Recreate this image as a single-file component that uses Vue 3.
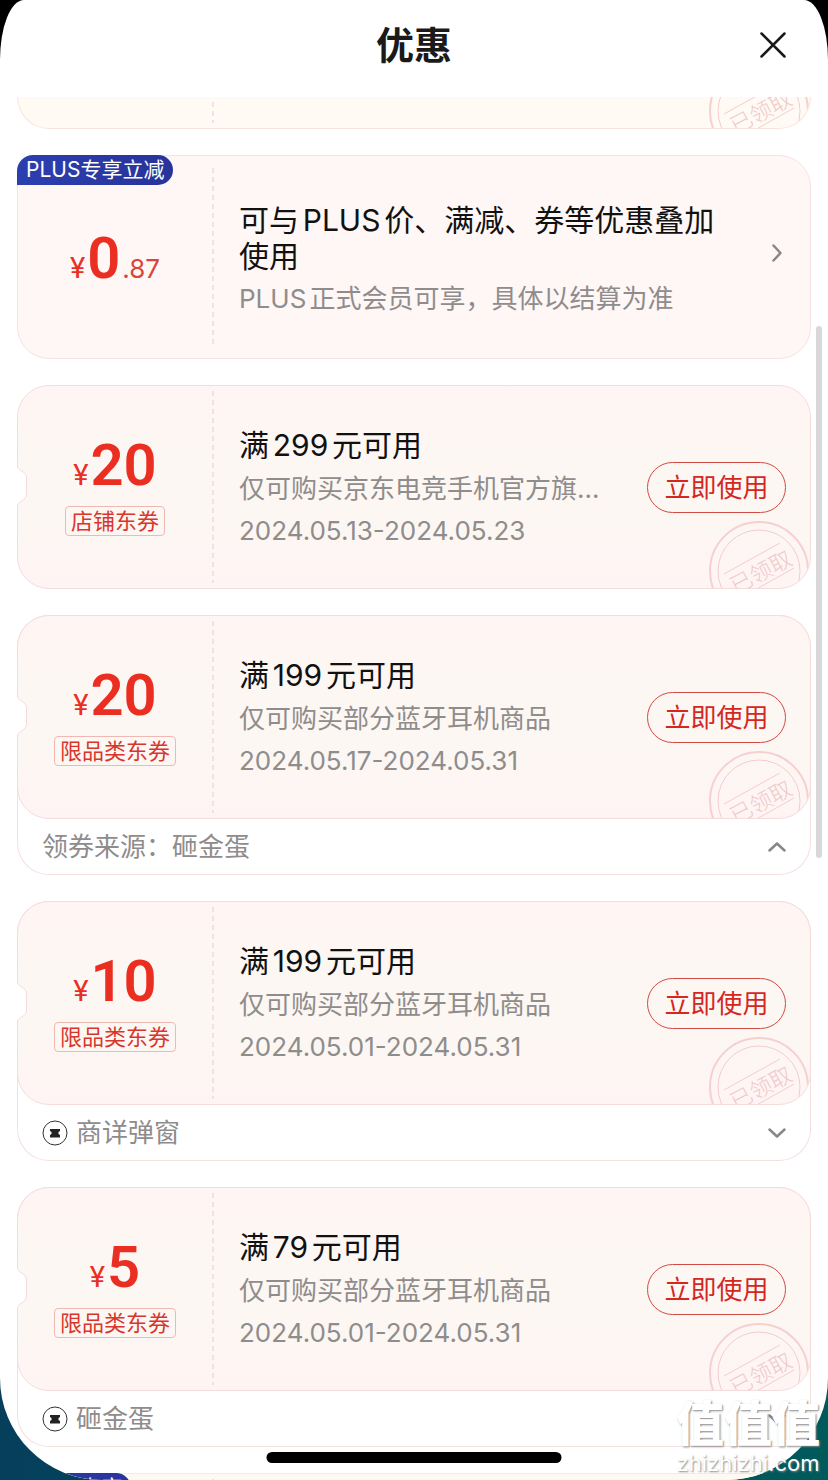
<script setup>
import { ref } from 'vue'

const coupons = ref([
  {
    id: 1,
    amount: '20',
    tag: '店铺东券',
    title: '满299元可用',
    desc: '仅可购买京东电竞手机官方旗舰店商品',
    period: '2024.05.13-2024.05.23'
  },
  {
    id: 2,
    amount: '20',
    tag: '限品类东券',
    title: '满199元可用',
    desc: '仅可购买部分蓝牙耳机商品',
    period: '2024.05.17-2024.05.31',
    source: '领券来源：砸金蛋',
    open: true
  },
  {
    id: 3,
    amount: '10',
    tag: '限品类东券',
    title: '满199元可用',
    desc: '仅可购买部分蓝牙耳机商品',
    period: '2024.05.01-2024.05.31',
    source: '商详弹窗',
    icon: true,
    open: false
  },
  {
    id: 4,
    amount: '5',
    tag: '限品类东券',
    title: '满79元可用',
    desc: '仅可购买部分蓝牙耳机商品',
    period: '2024.05.01-2024.05.31',
    source: '砸金蛋',
    icon: true,
    open: false
  }
])
</script>

<template>
  <div class="screen">
    <main class="sheet">
      <header class="header">
        <h1 class="heading">优惠</h1>
        <button class="close" type="button" aria-label="关闭">
          <svg width="28" height="28" viewBox="0 0 28 28" aria-hidden="true">
            <path d="M2.5 2.5 25.5 25.5M25.5 2.5 2.5 25.5" />
          </svg>
        </button>
      </header>

      <div class="list">
        <div class="ticket tail">
          <div class="left"></div>
          <div class="stamp">
            <svg width="102" height="68" viewBox="0 0 102 68" aria-hidden="true">
              <circle class="ring" cx="51" cy="51" r="49" />
              <circle class="thin" cx="51" cy="51" r="41" />
              <path class="thin" d="M16 54 72 23M38 75 86 48" />
              <text x="53" y="60" text-anchor="middle" transform="rotate(-28 53 52)">已领取</text>
            </svg>
          </div>
        </div>

        <article class="ticket plus">
          <span class="badge">PLUS专享立减</span>
          <div class="left">
            <p class="amount"><small>¥</small><b>0</b><i>.87</i></p>
          </div>
          <div class="info">
            <h2 class="title wrap">可与PLUS价、满减、券等优惠叠加使用</h2>
            <p class="desc">PLUS正式会员可享，具体以结算为准</p>
          </div>
          <button class="more" type="button" aria-label="查看详情">
            <svg width="10" height="18" viewBox="0 0 10 18" aria-hidden="true">
              <path d="M1.5 1.5 8.5 9 1.5 16.5" />
            </svg>
          </button>
        </article>

        <article v-for="c in coupons" :key="c.id" class="coupon" :class="{ sourced: c.source }">
          <div class="ticket">
            <svg class="notch" width="11" height="40" viewBox="0 0 11 40" aria-hidden="true">
              <path class="mask" d="M0 0H1C1 4 9 5 9 11V29C9 35 1 36 1 40H0Z" />
              <path class="edge" d="M.5 0C.5 5 9.5 5 9.5 12V28C9.5 35 .5 35 .5 40" />
            </svg>
            <div class="left">
              <p class="amount"><small>¥</small><b>{{ c.amount }}</b></p>
              <span class="tag">{{ c.tag }}</span>
            </div>
            <div class="info">
              <h2 class="title">{{ c.title }}</h2>
              <p class="desc">{{ c.desc }}</p>
              <p class="date">{{ c.period }}</p>
            </div>
            <button class="use" type="button">立即使用</button>
            <div class="stamp">
              <svg width="102" height="68" viewBox="0 0 102 68" aria-hidden="true">
                <circle class="ring" cx="51" cy="51" r="49" />
                <circle class="thin" cx="51" cy="51" r="41" />
                <path class="thin" d="M16 54 72 23M38 75 86 48" />
                <text x="53" y="60" text-anchor="middle" transform="rotate(-28 53 52)">已领取</text>
              </svg>
            </div>
          </div>
          <footer v-if="c.source" class="source">
            <svg v-if="c.icon" class="mark" width="26" height="26" viewBox="0 0 26 26" aria-hidden="true">
              <circle cx="13" cy="13" r="12" />
              <path d="M8 9H18V11L16.500 12V14L18 15V17.500H8V15L9.500 14V12L8 11Z" />
            </svg>
            <span>{{ c.source }}</span>
            <button class="toggle" type="button" aria-label="领券来源" :aria-expanded="c.open" @click="c.open = !c.open">
              <svg width="18" height="10" viewBox="0 0 18 10" aria-hidden="true">
                <path :d="c.open ? 'M1.500 8.500 9 1.500 16.500 8.500' : 'M1.500 1.500 9 8.500 16.500 1.500'" />
              </svg>
            </button>
          </footer>
        </article>

        <article class="ticket next">
          <span class="badge">PLUS专享</span>
          <div class="left"></div>
        </article>
      </div>

      <div class="scrollbar"></div>
    </main>

    <div class="home-bar"></div>
    <div class="watermark">
      <strong>值值值</strong>
      <span>zhizhizhi.com</span>
    </div>
  </div>
</template>

<style>
body {
  margin: 0;
}
</style>

<style scoped>
.screen {
  position: relative;
  height: 100vh;
  overflow: hidden;
  background:
    linear-gradient(#000, #000) top / 100% 50% no-repeat,
    linear-gradient(90deg, #053f5c, #005a5a);
  font-family: Inter, "Noto Sans CJK SC", sans-serif;
  text-autospace: normal;
  color: #1a1a1a;
}
.sheet {
  position: relative;
  display: flex;
  flex-direction: column;
  height: 100%;
  overflow: hidden;
  background: #fff;
  border-radius: 24px 24px 102px 102px / 60px 60px 102px 102px;
}
h1,
h2,
p {
  margin: 0;
  font-weight: 400;
}
button {
  padding: 0;
  border: 0;
  background: none;
  font: inherit;
  cursor: pointer;
}
svg {
  display: block;
  fill: none;
}
.header {
  flex: none;
  display: grid;
  grid-template-columns: 1fr auto 1fr;
  align-items: center;
  height: 90px;
  margin-bottom: 7px;
  padding: 0 41px;
}
.heading {
  grid-column: 2;
  font-size: 38px;
  line-height: 48px;
  font-weight: 700;
}
.close {
  justify-self: end;
}
.close path {
  stroke: #1a1a1a;
  stroke-width: 2.5;
  stroke-linecap: round;
}
.list {
  flex: 1;
  min-height: 0;
  overflow: hidden;
  display: flex;
  flex-direction: column;
  gap: 26px;
  padding: 0 17px;
}
.ticket {
  flex: none;
  position: relative;
  box-sizing: border-box;
  display: flex;
  align-items: center;
  height: 204px;
  padding-right: 24px;
  border: 1px solid #f5dcdc;
  border-radius: 32px;
  background: linear-gradient(#fff5f4, #fcf7f3 35%, #fcf7f3 65%, #fff4f4);
}
.tail {
  height: 32px;
  border-top: 0;
  border-color: #f8e6dc;
  border-radius: 0 0 32px 32px;
  background: #fffaf4;
}
.plus {
  background: #fff6f6;
  border-color: #f6e2e4;
}
.next {
  background: #fffaf0;
  border-color: #f8ecd8;
}
.coupon {
  flex: none;
}
.sourced {
  border-radius: 32px;
  background: #fff;
  box-shadow: inset 0 0 0 1px #f5e0e0;
}
.left {
  flex: none;
  align-self: stretch;
  box-sizing: border-box;
  position: relative;
  display: flex;
  flex-direction: column;
  align-items: center;
  justify-content: center;
  gap: 5px;
  width: 196px;
  padding-right: 2px;
}
.left::after {
  content: "";
  position: absolute;
  top: 5px;
  bottom: 5px;
  right: 0;
  width: 2px;
  background: repeating-linear-gradient(#eee2e2 0 5px, transparent 5px 9px);
}
.plus .left {
  padding-top: 12px;
}
.plus .left::after {
  top: 12px;
  bottom: 12px;
}
.amount {
  display: flex;
  align-items: baseline;
  gap: 2px;
  color: #ea2f22;
  font-family: Roboto, sans-serif;
  line-height: 52px;
}
.amount b {
  font-size: 58px;
  font-weight: 600;
}
.amount small {
  font-size: 29px;
  font-weight: 400;
}
.amount i {
  font-family: Inter, sans-serif;
  font-size: 26px;
  font-style: normal;
  color: #d9453c;
}
.tag {
  padding: 0 5px;
  border: 1px solid #f0b8b2;
  border-radius: 4px;
  font-size: 22px;
  line-height: 28px;
  color: #d8362c;
}
.info {
  flex: 1;
  min-width: 0;
  padding-left: 25px;
}
.title {
  font-size: 30px;
  line-height: 46px;
  color: #111;
}
.wrap {
  line-height: 36px;
  padding-top: 8px;
}
.desc {
  overflow: hidden;
  white-space: nowrap;
  text-overflow: ellipsis;
  font-size: 26px;
  line-height: 42px;
  color: #8f8c8c;
}
.plus .desc {
  padding-top: 4px;
}
.date {
  font-size: 26px;
  line-height: 42px;
  color: #8f8c8c;
}
.use {
  flex: none;
  box-sizing: border-box;
  width: 139px;
  height: 51px;
  margin-left: 40px;
  border: 1px solid #cf4a44;
  border-radius: 26px;
  font-size: 26px;
  line-height: 49px;
  color: #d4271f;
}
.more {
  flex: none;
  margin: 0 4px 8px 30px;
}
.more path,
.toggle path {
  stroke: #8a8686;
  stroke-width: 2.5;
  stroke-linecap: round;
  stroke-linejoin: round;
}
.badge {
  position: absolute;
  top: -1px;
  left: -1px;
  padding: 0 9px;
  border-radius: 16px 15px 15px 0;
  background: linear-gradient(90deg, #2c3fb0, #28339a);
  font-size: 21px;
  line-height: 30px;
  color: #fff;
  text-autospace: no-autospace;
}
.notch {
  position: absolute;
  left: -1px;
  top: 80px;
}
.mask {
  fill: #fff;
}
.edge {
  stroke: #f3dcdc;
}
.stamp {
  position: absolute;
  right: 0;
  bottom: 0;
  overflow: hidden;
  border-bottom-right-radius: 31px;
}
.tail .stamp {
  height: 32px;
  display: flex;
  align-items: flex-end;
}
.stamp svg {
  flex: none;
}
.stamp .ring {
  stroke: #f6cfcf;
  stroke-width: 2;
}
.stamp .thin {
  stroke: #f3cccc;
}
.stamp text {
  font-size: 22px;
  font-weight: 300;
  fill: #f0c8c8;
}
.source {
  display: flex;
  align-items: center;
  gap: 8px;
  height: 56px;
  padding: 0 25px;
  font-size: 26px;
  line-height: 36px;
  color: #8f8c8c;
}
.mark circle {
  stroke: #333;
}
.mark path {
  fill: #222;
}
.toggle {
  margin-left: auto;
}
.scrollbar {
  position: absolute;
  top: 22%;
  right: 6px;
  width: 6px;
  height: 36%;
  border-radius: 3px;
  background: #d8d8d8;
}
.home-bar {
  position: absolute;
  left: 50%;
  bottom: 17px;
  width: 295px;
  height: 11px;
  border-radius: 6px;
  background: #000;
  transform: translateX(-50%);
}
.watermark {
  position: absolute;
  right: 8px;
  bottom: 4px;
  display: flex;
  flex-direction: column;
  align-items: center;
  color: #fff;
  text-shadow: 1px 1px 2px #888;
}
.watermark strong {
  font-size: 48px;
  line-height: 52px;
  font-weight: 900;
}
.watermark span {
  font-size: 22px;
  line-height: 26px;
}
</style>
